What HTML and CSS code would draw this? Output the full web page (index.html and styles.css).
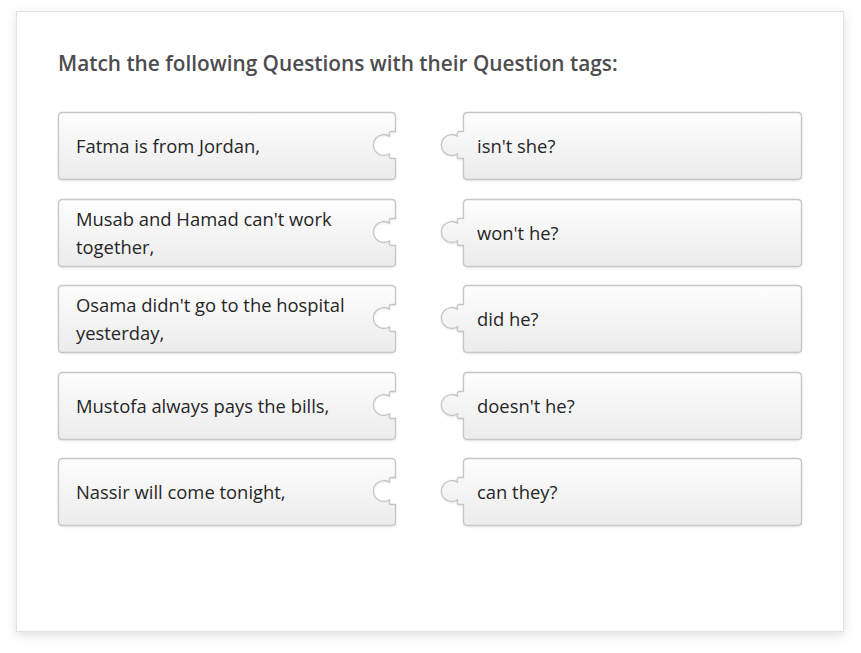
FILE: index.html
```html
<!DOCTYPE html>
<html lang="en">
<head>
<meta charset="utf-8">
<title>Match Questions</title>
<link rel="stylesheet" href="styles.css">
</head>
<body>
<div class="card">
  <h1 class="title">Match the following Questions with their Question tags:</h1>
  <div class="board">
    <div class="tile q"><svg class="shape" width="338" height="68" viewBox="0 0 338 68"><use href="#qshape"/></svg><span class="txt">Fatma is from Jordan,</span></div>
    <div class="tile t"><svg class="shape" width="361" height="68" viewBox="0 0 361 68"><use href="#tshape"/></svg><span class="txt">isn't she?</span></div>
    <div class="tile q"><svg class="shape" width="338" height="68" viewBox="0 0 338 68"><use href="#qshape"/></svg><span class="txt">Musab and Hamad can't work together,</span></div>
    <div class="tile t"><svg class="shape" width="361" height="68" viewBox="0 0 361 68"><use href="#tshape"/></svg><span class="txt">won't he?</span></div>
    <div class="tile q"><svg class="shape" width="338" height="68" viewBox="0 0 338 68"><use href="#qshape"/></svg><span class="txt">Osama didn't go to the hospital yesterday,</span></div>
    <div class="tile t"><svg class="shape" width="361" height="68" viewBox="0 0 361 68"><use href="#tshape"/></svg><span class="txt">did he?</span></div>
    <div class="tile q"><svg class="shape" width="338" height="68" viewBox="0 0 338 68"><use href="#qshape"/></svg><span class="txt">Mustofa always pays the bills,</span></div>
    <div class="tile t"><svg class="shape" width="361" height="68" viewBox="0 0 361 68"><use href="#tshape"/></svg><span class="txt">doesn't he?</span></div>
    <div class="tile q"><svg class="shape" width="338" height="68" viewBox="0 0 338 68"><use href="#qshape"/></svg><span class="txt">Nassir will come tonight,</span></div>
    <div class="tile t"><svg class="shape" width="361" height="68" viewBox="0 0 361 68"><use href="#tshape"/></svg><span class="txt">can they?</span></div>
  </div>
</div>
<svg class="defs" width="0" height="0" aria-hidden="true">
  <defs>
    <linearGradient id="tileGrad" x1="0" y1="0" x2="0" y2="1">
      <stop offset="0" stop-color="#fdfdfd"/>
      <stop offset="1" stop-color="#ececec"/>
    </linearGradient>
    <path id="qshape" fill="url(#tileGrad)" stroke="#c6c6c6" stroke-width="1.3"
      d="M4.5 0.5 H333.5 Q337.5 0.5 337.5 4.5 V19.5 H333 C330.5 19.5 331 23 332 24.5 A10.5 10.5 0 1 0 332 41.5 C331 43 330.5 46.5 333 46.5 H337.5 V63.5 Q337.5 67.5 333.5 67.5 H4.5 Q0.5 67.5 0.5 63.5 V4.5 Q0.5 0.5 4.5 0.5 Z"/>
    <path id="tshape" fill="url(#tileGrad)" stroke="#c6c6c6" stroke-width="1.3"
      d="M26.5 0.5 H356.5 Q360.5 0.5 360.5 4.5 V63.5 Q360.5 67.5 356.5 67.5 H26.5 Q22.5 67.5 22.5 63.5 V46.5 H18 C15.5 46.5 16 43 17 41.5 A10.5 10.5 0 1 1 17 24.5 C16 23 15.5 19.5 18 19.5 H22.5 V4.5 Q22.5 0.5 26.5 0.5 Z"/>
  </defs>
</svg>
</body>
</html>
```

FILE: styles.css
```css
html, body {
  margin: 0;
  padding: 0;
  background: #ffffff;
}

body {
  font-family: "Open Sans", "Noto Sans", sans-serif;
  width: 861px;
  height: 653px;
  overflow: hidden;
}

.card {
  box-sizing: border-box;
  margin: 11px 0 0 16px;
  width: 828px;
  height: 621px;
  background: #ffffff;
  border: 1px solid #e2e2e2;
  box-shadow: 0 3px 10px rgba(0, 0, 0, 0.13);
  padding: 37px 41px 0 41px;
}

.title {
  margin: 0 0 35px 0;
  font-size: 20.8px;
  line-height: 28px;
  font-weight: 600;
  color: #4d4d4f;
}

.board {
  display: grid;
  grid-template-columns: 338px 361px;
  column-gap: 45px;
  row-gap: 18.5px;
}

.tile {
  position: relative;
  height: 68px;
  display: flex;
  align-items: center;
  box-sizing: border-box;
}

.tile.q {
  padding: 0 40px 0 18px;
}

.tile.t {
  padding: 0 20px 0 36px;
}

.shape {
  position: absolute;
  left: 0;
  top: 0;
  overflow: visible;
  filter: drop-shadow(0 1px 1px rgba(0, 0, 0, 0.08));
}

.txt {
  position: relative;
  font-size: 18.4px;
  line-height: 28px;
  color: #262626;
}

.defs {
  position: absolute;
  width: 0;
  height: 0;
}
```
